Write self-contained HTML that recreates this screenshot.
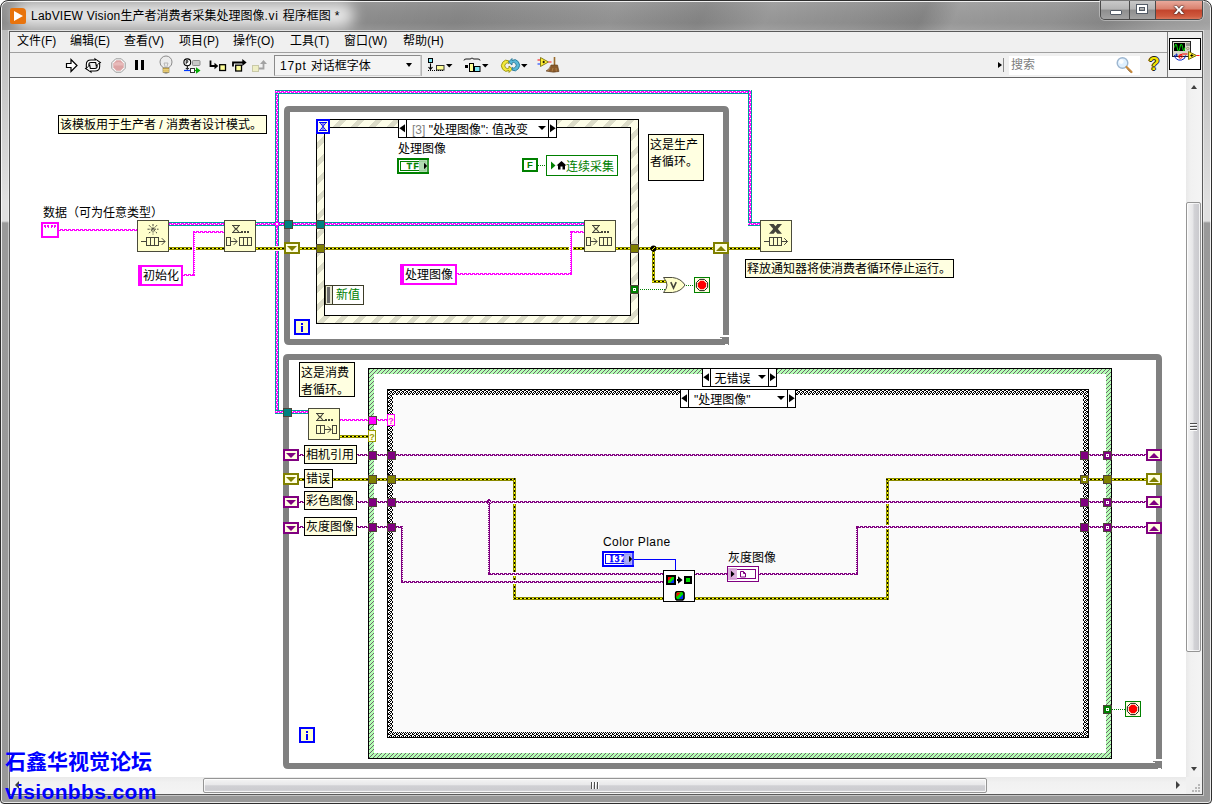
<!DOCTYPE html>
<html lang="zh"><head><meta charset="utf-8"><title>LabVIEW Vision生产者消费者采集处理图像.vi 程序框图</title>
<style>
html,body{margin:0;padding:0;}
body{width:1212px;height:804px;overflow:hidden;position:relative;background:#9a9a9a;font-family:"Liberation Sans","Noto Sans CJK SC",sans-serif;font-size:12px;color:#000;}
div{position:absolute;box-sizing:content-box;white-space:nowrap;}
svg{position:absolute;left:0;top:0;}
.lb{font-size:12px;overflow:hidden;}
.tx{font-size:12px;line-height:14px;}
.mn{font-size:12px;line-height:20px;top:31px;}
</style></head>
<body>
<div style="left:0;top:0;width:1212px;height:804px;background:#fff;"></div>
<div id="frame" style="left:0;top:0;width:1210px;height:802px;border:1px solid #2e2e2e;border-radius:8px 8px 4px 4px;background:linear-gradient(180deg,#b4b4b4 0px,#bcbcbc 31px,#e0e0e0 200px,#e0e0e0 220px,#9a9a9a 222px,#989898 100%);box-shadow:inset 0 0 0 1px rgba(255,255,255,.8);"></div>
<div id="titlebar" style="left:2px;top:2px;width:1208px;height:28px;border-radius:6px 6px 0 0;background:linear-gradient(115deg,rgba(255,255,255,0) 0px,rgba(255,255,255,0) 340px,rgba(0,0,0,.05) 420px,rgba(255,255,255,.06) 560px,rgba(0,0,0,.06) 640px,rgba(255,255,255,.10) 700px,rgba(255,255,255,.02) 780px,rgba(0,0,0,.07) 840px,rgba(255,255,255,.12) 870px,rgba(255,255,255,.05) 960px,rgba(0,0,0,.04) 1010px,rgba(255,255,255,.12) 1060px,rgba(255,255,255,.28) 1150px,rgba(255,255,255,.3) 1210px),linear-gradient(180deg,#969696 0,#8e8e8e 40%,#8a8a8a 75%,#949494 100%);"></div>
<div style="left:14px;top:3px;width:340px;height:25px;border-radius:14px;background:rgba(255,255,255,.78);filter:blur(7px);"></div>
<div style="left:10px;top:8px;width:16px;height:16px;border-radius:2px 4px 2px 2px;background:#e8730c;"></div>
<div style="left:14px;top:11px;width:0;height:0;border-left:9px solid #fff;border-top:5px solid transparent;border-bottom:5px solid transparent;"></div>
<div id="caption" style="left:31px;top:7px;height:18px;line-height:18px;font-size:12px;color:#000;"><span id="cap1" style="letter-spacing:0.21px">LabVIEW Vision</span><span id="cap2">生产者消费者采集处理图像</span><span id="cap3" style="letter-spacing:0.75px">.vi </span><span id="cap4">程序框图</span><span id="cap5" style="letter-spacing:0.5px"> *</span></div>
<div style="left:1100px;top:1px;width:101px;height:18px;border:1px solid #4a4a4a;border-top:none;border-radius:0 0 5px 5px;overflow:hidden;box-shadow:0 0 0 1px rgba(255,255,255,.35);"><div style="left:0;top:0;width:28px;height:18px;background:linear-gradient(180deg,#c8c8c8 0,#b4b4b4 45%,#8e8e8e 50%,#a2a2a2 100%);"></div><div style="left:28px;top:0;width:1px;height:18px;background:#4a4a4a;"></div><div style="left:29px;top:0;width:25px;height:18px;background:linear-gradient(180deg,#c8c8c8 0,#b4b4b4 45%,#8e8e8e 50%,#a2a2a2 100%);"></div><div style="left:54px;top:0;width:1px;height:18px;background:#4a4a4a;"></div><div style="left:55px;top:0;width:46px;height:18px;background:linear-gradient(180deg,#e9a99b 0,#d9806d 45%,#c2442c 50%,#cf5a3e 85%,#d9775c 100%);"></div><div style="left:9px;top:9px;width:10px;height:3px;background:#fff;border:1px solid #535b66;border-radius:1px;"></div><div style="left:36px;top:4px;width:6px;height:4px;border:2px solid #fff;outline:1px solid #535b66;box-shadow:inset 0 0 0 1px #535b66;"></div><div style="left:68px;top:-1px;width:20px;height:18px;line-height:18px;text-align:center;font-family:'Liberation Sans',sans-serif;font-weight:bold;font-size:15px;color:#fff;text-shadow:0 0 1px #3b2a2a,0 0 1px #3b2a2a,0 0 2px #3b2a2a;transform:scaleX(1.25);">x</div></div>
<div id="client" style="left:9px;top:31px;width:1192px;height:762px;border:1px solid #5a5a5a;background:#f0f0f0;box-shadow:0 0 0 1px rgba(255,255,255,.45);"></div>
<div class="mn" style="left:17px;">文件(F)</div>
<div class="mn" style="left:70px;">编辑(E)</div>
<div class="mn" style="left:124px;">查看(V)</div>
<div class="mn" style="left:179px;">项目(P)</div>
<div class="mn" style="left:233px;">操作(O)</div>
<div class="mn" style="left:290px;">工具(T)</div>
<div class="mn" style="left:344px;">窗口(W)</div>
<div class="mn" style="left:403px;">帮助(H)</div>
<div style="left:10px;top:52px;width:1157px;height:1px;background:#a0a0a0;"></div>
<div style="left:10px;top:77px;width:1192px;height:1px;background:#646464;"></div>
<div style="left:1167px;top:32px;width:1px;height:45px;background:#7a7a7a;"></div>
<div id="diagram" style="left:10px;top:78px;width:1176px;height:699px;background:#fff;"></div>
<div style="left:274px;top:55px;width:145px;height:19px;border:1px solid;border-color:#8a8a8a #d0d0d0 #d0d0d0 #8a8a8a;background:#f4f4f4;"></div>
<div style="left:280px;top:57px;height:19px;line-height:19px;font-size:12px;" id="fontring"><span style="letter-spacing:0.8px">17pt </span>对话框字体</div>
<div style="left:406px;top:63px;width:0;height:0;border-top:4px solid #000;border-left:3.5px solid transparent;border-right:3.5px solid transparent;"></div>
<div style="left:1009px;top:56px;width:131px;height:19px;background:#fff;"></div>
<div style="left:1011px;top:56px;height:19px;line-height:19px;font-size:12px;color:#7d7d7d;">搜索</div>
<div style="left:998px;top:62px;width:0;height:0;border-left:4px solid #000;border-top:3px solid transparent;border-bottom:3px solid transparent;"></div>
<div style="left:1003px;top:58px;width:1px;height:14px;background:#888;"></div>
<div style="left:1146px;top:53px;width:16px;height:22px;line-height:22px;text-align:center;font-family:'Liberation Sans',sans-serif;font-weight:bold;font-size:18px;color:#f2e400;text-shadow:1px 0 0 #222,-1px 0 0 #222,0 1px 0 #222,0 -1px 0 #222;">?</div>
<div style="left:1169px;top:38px;width:30px;height:30px;border:1px solid #000;background:#fff;"></div>
<div style="left:1186px;top:78px;width:16px;height:700px;background:linear-gradient(90deg,#e9e9e9 0,#f1f1f1 30%,#f4f4f4 100%);"></div>
<div style="left:1186px;top:202px;width:13px;height:448px;border:1px solid #959595;border-radius:2px;background:linear-gradient(90deg,#f4f4f4 0,#e6e6e8 45%,#d2d2d6 55%,#c8c8cc 100%);box-shadow:inset 0 0 0 1px rgba(255,255,255,.75);"></div>
<div style="left:1190px;top:423px;width:7px;height:1px;background:#4e4e4e;box-shadow:0 1px 0 rgba(255,255,255,.9);"></div>
<div style="left:1190px;top:426px;width:7px;height:1px;background:#4e4e4e;box-shadow:0 1px 0 rgba(255,255,255,.9);"></div>
<div style="left:1190px;top:429px;width:7px;height:1px;background:#4e4e4e;box-shadow:0 1px 0 rgba(255,255,255,.9);"></div>
<div style="left:1191px;top:85px;width:0;height:0;border-bottom:4px solid #404040;border-left:3.5px solid transparent;border-right:3.5px solid transparent;"></div>
<div style="left:1191px;top:767px;width:0;height:0;border-top:4px solid #404040;border-left:3.5px solid transparent;border-right:3.5px solid transparent;"></div>
<div style="left:10px;top:777px;width:1192px;height:17px;background:linear-gradient(180deg,#e9e9e9 0,#f1f1f1 30%,#f4f4f4 100%);"></div>
<div style="left:203px;top:778px;width:782px;height:13px;border:1px solid #959595;border-radius:2px;background:linear-gradient(180deg,#f4f4f4 0,#e8e8ea 45%,#d0d0d4 52%,#cdcdd1 80%,#d6d6da 100%);box-shadow:inset 0 0 0 1px rgba(255,255,255,.75);"></div>
<div style="left:591px;top:782px;width:1px;height:7px;background:#4e4e4e;box-shadow:1px 0 0 rgba(255,255,255,.9);"></div>
<div style="left:594px;top:782px;width:1px;height:7px;background:#4e4e4e;box-shadow:1px 0 0 rgba(255,255,255,.9);"></div>
<div style="left:597px;top:782px;width:1px;height:7px;background:#4e4e4e;box-shadow:1px 0 0 rgba(255,255,255,.9);"></div>
<div style="left:15px;top:781px;width:0;height:0;border-right:4px solid #404040;border-top:4px solid transparent;border-bottom:4px solid transparent;"></div>
<div style="left:1176px;top:781px;width:0;height:0;border-left:4px solid #404040;border-top:4px solid transparent;border-bottom:4px solid transparent;"></div>
<div style="left:1186px;top:777px;width:16px;height:17px;background:#f0f0f0;"></div>
<div style="left:1198px;top:790px;width:2px;height:2px;background:#b8b8b8;"></div>
<div style="left:1195px;top:790px;width:2px;height:2px;background:#b8b8b8;"></div>
<div style="left:1192px;top:790px;width:2px;height:2px;background:#b8b8b8;"></div>
<div style="left:1198px;top:787px;width:2px;height:2px;background:#b8b8b8;"></div>
<div style="left:1195px;top:787px;width:2px;height:2px;background:#b8b8b8;"></div>
<div style="left:1198px;top:784px;width:2px;height:2px;background:#b8b8b8;"></div>
<svg width="1212" height="804" viewBox="0 0 1212 804" shape-rendering="crispEdges">
<path d="M66.5,63.5 h4.5 v-4 l6,6 l-6,6 v-4 h-4.5 z" fill="#fff" stroke="#000" stroke-width="1.2" stroke-linejoin="miter" shape-rendering="geometricPrecision"/>
<g shape-rendering="geometricPrecision" fill="none" stroke-linejoin="miter"><path d="M87.6,67 V64.5 Q87.6,61.3 91,61.300 H96" stroke="#000" stroke-width="3.6"/><path d="M98.4,64 V66.5 Q98.4,69.700 95,69.700 H90" stroke="#000" stroke-width="3.6"/><polygon points="95,58.9 100.400,62.500 96.300,65.900" fill="#fff" stroke="#000" stroke-width="1.1"/><polygon points="91,72.100 85.600,68.500 89.700,65.100" fill="#fff" stroke="#000" stroke-width="1.1"/><path d="M87.6,66.800 V64.5 Q87.6,61.3 91,61.300 H96.500" stroke="#fff" stroke-width="1.5"/><path d="M98.4,64.200 V66.5 Q98.4,69.700 95,69.700 H89.500" stroke="#fff" stroke-width="1.5"/></g>
<polygon points="125.2,68.3 121.3,72.2 115.7,72.2 111.8,68.3 111.8,62.7 115.7,58.8 121.3,58.8 125.2,62.7" fill="#fafafa" stroke="#9a9a9a" shape-rendering="geometricPrecision"/>
<polygon points="123.7,67.6 120.6,70.7 116.4,70.7 113.3,67.6 113.3,63.4 116.4,60.3 120.6,60.3 123.7,63.4" fill="#dca4a4" shape-rendering="geometricPrecision"/>
<path d="M113.5,65.5 h10 v-2 q-5,-3 -10,0 z" fill="#e8baba" shape-rendering="geometricPrecision"/>
<rect x="135" y="60" width="3" height="10" fill="#000" />
<rect x="141" y="60" width="3" height="10" fill="#000" />
<g shape-rendering="geometricPrecision"><path d="M163.5,68 q-4,-3 -3.5,-6 a6,6 0 0 1 12,0 q0.5,3 -3.5,6 z" fill="#ececec" stroke="#8c8c8c"/><path d="M164,63 l1.5,5 M168,63 l-1.5,5 M164,63 h4" fill="none" stroke="#aaa" stroke-width="0.8"/><rect x="163" y="68" width="6" height="4.5" fill="#d8b24a" stroke="#8a7a40" stroke-width="0.6"/><path d="M163,69.7 h6 M163,71.2 h6" stroke="#f3e3a0" stroke-width="0.7"/><rect x="164.5" y="72.5" width="3" height="1" fill="#777"/></g>
<g shape-rendering="geometricPrecision"><circle cx="187.3" cy="62.3" r="3.4" fill="#fff" stroke="#000" stroke-width="1.1"/><path d="M186.2,60.5 v3.8 M186.2,60.6 h1.6 v1.7 h-1.6" fill="none" stroke="#000" stroke-width="0.8"/><path d="M187.3,65.7 v3.5 M185.8,68 l1.5,1.5 l1.5,-1.5" fill="none" stroke="#000" stroke-width="1"/><rect x="192.5" y="60.5" width="7.5" height="5" rx="0.8" fill="#c8c8c8" stroke="#8e8e8e"/><path d="M184,70.5 h7" stroke="#0038ff" stroke-width="1.2"/><rect x="190.5" y="68.5" width="4" height="4" fill="#fff" stroke="#333"/><path d="M194.5,70.5 h2" stroke="#00a000" stroke-width="1.2"/><polygon points="196,67.3 200.5,70.5 196,73.7" fill="#00a800"/></g>
<g shape-rendering="geometricPrecision"><path d="M210.5,60.5 v5.5 h5" fill="none" stroke="#000" stroke-width="1.8"/><polygon points="214.5,62.8 218.3,66 214.5,69.2" fill="#000"/><rect x="219.7" y="64.7" width="5.8" height="5.8" fill="#ffff99" stroke="#000" stroke-width="1.3"/></g>
<g shape-rendering="geometricPrecision"><path d="M233,66.5 v-4 h10" fill="none" stroke="#000" stroke-width="1.8"/><polygon points="242.3,59 246.6,62.5 242.3,66" fill="#000"/><rect x="235.7" y="65.2" width="5.8" height="5.8" fill="#ffff99" stroke="#000" stroke-width="1.3"/></g>
<g shape-rendering="geometricPrecision"><rect x="252.5" y="65.5" width="6" height="6" fill="#eeeec4" stroke="#c9c9a8"/><path d="M259,68.5 h4.5 v-5" fill="none" stroke="#a2a2a2" stroke-width="1.8"/><polygon points="260,64 263.5,60 267,64" fill="#a2a2a2"/></g>
<rect x="421" y="55" width="1" height="21" fill="#b4b4b4" />
<g shape-rendering="geometricPrecision"><rect x="428.5" y="58.5" width="4" height="4" fill="#7fe6f5" stroke="#000"/><path d="M430.5,63.5 v5 M428.5,67 l2,2.3 l2,-2.3" fill="none" stroke="#000" stroke-width="1.1"/><rect x="436.5" y="65.5" width="7.5" height="4.5" fill="#ffff99" stroke="#333"/><path d="M428,70.5 h16" stroke="#000" stroke-dasharray="1 1"/><polygon points="446,64 452.5,64 449.2,67.6" fill="#000"/></g>
<g shape-rendering="geometricPrecision"><path d="M464,60.5 q0,-1.5 2,-1.5 h4 q1.5,0 2,-1.2 q0.5,1.2 2,1.2 h4 q2,0 2,1.5" fill="none" stroke="#000" stroke-width="0.9"/><rect x="465" y="65" width="3" height="3" fill="#000"/><rect x="469.5" y="63.5" width="4" height="8" fill="#ffff99" stroke="#000"/><rect x="474.5" y="66.5" width="5.5" height="5" fill="#7fe6f5" stroke="#000"/><polygon points="482,64 488.5,64 485.2,67.6" fill="#000"/></g>
<g shape-rendering="geometricPrecision"><path d="M509,61 a5,5.5 0 1 0 0,9.5 v2 l3.5,-3.5 l-3.5,-3 v2 a2.6,2.8 0 1 1 0,-4.5 z" fill="#f2ea3a" stroke="#8c8400" stroke-width="0.8"/><path d="M512,70 a5,5.5 0 1 0 0,-9.5 v-2 l-3.5,3.5 l3.5,3 v-2 a2.6,2.8 0 1 1 0,4.5 z" fill="#58b8d8" stroke="#1c6c8c" stroke-width="0.8"/><polygon points="521,64 527.5,64 524.2,67.6" fill="#000"/></g>
<g shape-rendering="geometricPrecision"><path d="M537.5,60 h3 " stroke="#ff0000" stroke-width="1"/><path d="M537.5,64 h3" stroke="#0030ff" stroke-width="1"/><polygon points="540.5,57.5 548.5,62 540.5,66.5" fill="#ffee33" stroke="#6a6200" stroke-width="0.8"/><path d="M542.5,62 h2.4 M543.7,60.8 v2.4" stroke="#000" stroke-width="0.9"/><path d="M548.5,62 h3" stroke="#ff0000" stroke-width="0.9"/><path d="M554.5,57 v8" stroke="#9a6b2a" stroke-width="1.6"/><path d="M551,65 h6.5 l1.5,6.5 q-6,1.5 -13,-0.5 q4,-2 5,-6 z" fill="#8a5a2c" stroke="#5e3d1c" stroke-width="0.6"/><path d="M550,68 l-2,3 M553,68 l-1,3.5 M556,68 l0.3,3.5" stroke="#c79a5a" stroke-width="0.6"/></g>
<g shape-rendering="geometricPrecision"><circle cx="1122.5" cy="63" r="5.3" fill="#dff0ff" stroke="#9db6d0" stroke-width="1.4"/><circle cx="1121.3" cy="61.6" r="2.3" fill="#fff" opacity="0.9"/><path d="M1126.5,67 l5,5" stroke="#c98a3c" stroke-width="2.2" stroke-linecap="round"/><path d="M1127.5,69.3 l3.3,3.3" stroke="#8a6a4a" stroke-width="0.8"/></g>
<g shape-rendering="geometricPrecision"><rect x="1172.5" y="41.5" width="18" height="15" fill="#d8d8c8" stroke="#222"/><rect x="1174" y="43" width="11" height="8" fill="#000"/><path d="M1174.5,47.5 q1.35,-7 2.7,0 t2.7,0 t2.7,0 t2.2,0" fill="none" stroke="#00e000" stroke-width="1"/><rect x="1186.5" y="43" width="1" height="3" fill="#555"/><rect x="1188.5" y="43" width="1" height="3" fill="#555"/><circle cx="1187.8" cy="48.5" r="1.2" fill="#e8d8b0" stroke="#555" stroke-width="0.5"/><path d="M1174.5,55 q1,6 7,5 q4,-1 4,-4.500" fill="none" stroke="#0020c0" stroke-width="1"/><path d="M1179.5,57.5 q0,-3.500 3,-3.500 h5" fill="none" stroke="#ff0000" stroke-width="1"/><circle cx="1180.5" cy="56.5" r="1.8" fill="none" stroke="#ff0000" stroke-width="0.9"/><path d="M1176.5,53.5 v3 M1175,55 h3" stroke="#0020c0" stroke-width="0.8"/><polygon points="1188.500,51.500 1196.500,55.500 1188.500,59.500" fill="#ffee33" stroke="#6a6200" stroke-width="0.9"/><path d="M1190.300,55.500 h3 M1191.800,54 v3" stroke="#000" stroke-width="0.9"/><path d="M1196.500,55.500 h3" stroke="#ff0000" stroke-width="0.9"/></g>
<defs>
<pattern id="evs" width="18" height="18" patternUnits="userSpaceOnUse" patternTransform="translate(9 0)">
<rect width="18" height="18" fill="#fdfde8"/>
<polygon points="0,0 7,0 0,7" fill="#dcdcc8"/><polygon points="18,0 18,7 7,18 0,18" fill="#dcdcc8"/>
</pattern>
<pattern id="grn" width="4" height="4" patternUnits="userSpaceOnUse">
<rect width="4" height="4" fill="#b4ffb4"/>
<rect x="2" y="0" width="1" height="1" fill="#6e646e"/><rect x="1" y="1" width="1" height="1" fill="#6e646e"/>
<rect x="0" y="2" width="1" height="1" fill="#6e646e"/><rect x="3" y="3" width="1" height="1" fill="#6e646e"/>
</pattern>
<pattern id="chk" width="4" height="4" patternUnits="userSpaceOnUse">
<rect width="4" height="4" fill="#000"/>
<rect x="0" y="0" width="1" height="1" fill="#fff"/><rect x="2" y="0" width="1" height="1" fill="#fff"/>
<rect x="1" y="1" width="1" height="1" fill="#fff"/><rect x="3" y="1" width="1" height="1" fill="#fff"/>
<rect x="2" y="2" width="2" height="1" fill="#fff"/>
<rect x="0" y="3" width="2" height="1" fill="#fff"/>
</pattern>
</defs>
<path shape-rendering="geometricPrecision" fill="#808080" fill-rule="evenodd" d="M289,106 H724 Q729,106 729,111 V345 H289 Q284,345 284,340 V111 Q284,106 289,106 Z M290,112 V339 H723 V112 Z"/>
<rect x="723" y="335" width="6" height="2" fill="#fff" />
<rect x="722" y="337" width="7" height="8" fill="#808080" />
<rect x="720" y="337" width="2" height="1" fill="#808080" />
<rect x="725" y="344" width="3" height="1" fill="#fff" />
<path shape-rendering="geometricPrecision" fill="#808080" fill-rule="evenodd" d="M288,354 H1157 Q1162,354 1162,359 V769 H288 Q283,769 283,764 V359 Q283,354 288,354 Z M289,360 V763 H1156 V360 Z"/>
<rect x="1156" y="759" width="6" height="2" fill="#fff" />
<rect x="1155" y="761" width="7" height="8" fill="#808080" />
<rect x="1153" y="761" width="2" height="1" fill="#808080" />
<rect x="1158" y="768" width="3" height="1" fill="#fff" />
<rect x="316" y="119" width="323" height="205" fill="#000" />
<rect x="317" y="120" width="321" height="203" fill="url(#evs)" />
<rect x="324" y="127" width="307" height="189" fill="#000" />
<rect x="325" y="128" width="305" height="187" fill="#fff" />
<rect x="368" y="368" width="744" height="391" fill="#000" />
<rect x="369" y="369" width="742" height="389" fill="url(#grn)" />
<rect x="374" y="374" width="732" height="379" fill="#fff" />
<rect x="387" y="389" width="702" height="349" fill="#000" />
<rect x="388" y="390" width="700" height="347" fill="url(#chk)" />
<rect x="393" y="395" width="690" height="337" fill="#fafafa" />
<line x1="59" y1="229.5" x2="137" y2="229.5" stroke="#ff00ff" stroke-dasharray="3 1" stroke-dashoffset="3"/>
<line x1="59" y1="230.5" x2="137" y2="230.5" stroke="#ff00ff" stroke-dasharray="3 1" stroke-dashoffset="1"/>
<rect x="169" y="222" width="55" height="4" fill="#00a0a0" />
<rect x="169" y="223" width="55" height="2" fill="#ff00ff" />
<line x1="169" y1="223.5" x2="224" y2="223.5" stroke="#fff" stroke-dasharray="1 3" stroke-dashoffset="1"/>
<line x1="169" y1="224.5" x2="224" y2="224.5" stroke="#fff" stroke-dasharray="1 3" stroke-dashoffset="3"/>
<rect x="256" y="222" width="328" height="4" fill="#00a0a0" />
<rect x="256" y="223" width="328" height="2" fill="#ff00ff" />
<line x1="256" y1="223.5" x2="584" y2="223.5" stroke="#fff" stroke-dasharray="1 3" stroke-dashoffset="0"/>
<line x1="256" y1="224.5" x2="584" y2="224.5" stroke="#fff" stroke-dasharray="1 3" stroke-dashoffset="2"/>
<rect x="275" y="90" width="4" height="156" fill="#00a0a0" />
<rect x="276" y="90" width="2" height="156" fill="#ff00ff" />
<line x1="276.5" y1="90" x2="276.5" y2="246" stroke="#fff" stroke-dasharray="1 3" stroke-dashoffset="2"/>
<line x1="277.5" y1="90" x2="277.5" y2="246" stroke="#fff" stroke-dasharray="1 3" stroke-dashoffset="0"/>
<rect x="275" y="251" width="4" height="163" fill="#00a0a0" />
<rect x="276" y="251" width="2" height="163" fill="#ff00ff" />
<line x1="276.5" y1="251" x2="276.5" y2="414" stroke="#fff" stroke-dasharray="1 3" stroke-dashoffset="3"/>
<line x1="277.5" y1="251" x2="277.5" y2="414" stroke="#fff" stroke-dasharray="1 3" stroke-dashoffset="1"/>
<rect x="275" y="90" width="477" height="4" fill="#00a0a0" />
<rect x="275" y="91" width="477" height="2" fill="#ff00ff" />
<line x1="275" y1="91.5" x2="752" y2="91.5" stroke="#fff" stroke-dasharray="1 3" stroke-dashoffset="3"/>
<line x1="275" y1="92.5" x2="752" y2="92.5" stroke="#fff" stroke-dasharray="1 3" stroke-dashoffset="1"/>
<rect x="748" y="90" width="4" height="136" fill="#00a0a0" />
<rect x="749" y="90" width="2" height="136" fill="#ff00ff" />
<line x1="749.5" y1="90" x2="749.5" y2="226" stroke="#fff" stroke-dasharray="1 3" stroke-dashoffset="2"/>
<line x1="750.5" y1="90" x2="750.5" y2="226" stroke="#fff" stroke-dasharray="1 3" stroke-dashoffset="0"/>
<rect x="748" y="222" width="12" height="4" fill="#00a0a0" />
<rect x="748" y="223" width="12" height="2" fill="#ff00ff" />
<line x1="748" y1="223.5" x2="760" y2="223.5" stroke="#fff" stroke-dasharray="1 3" stroke-dashoffset="0"/>
<line x1="748" y1="224.5" x2="760" y2="224.5" stroke="#fff" stroke-dasharray="1 3" stroke-dashoffset="2"/>
<rect x="275" y="410" width="33" height="4" fill="#00a0a0" />
<rect x="275" y="411" width="33" height="2" fill="#ff00ff" />
<line x1="275" y1="411.5" x2="308" y2="411.5" stroke="#fff" stroke-dasharray="1 3" stroke-dashoffset="3"/>
<line x1="275" y1="412.5" x2="308" y2="412.5" stroke="#fff" stroke-dasharray="1 3" stroke-dashoffset="1"/>
<rect x="275" y="222" width="4" height="4" fill="#ff00ff" />
<rect x="276" y="221" width="2" height="6" fill="#ff00ff" />
<rect x="274" y="223" width="6" height="2" fill="#ff00ff" />
<rect x="276" y="223" width="2" height="2" fill="#fff" />
<rect x="169" y="247" width="23" height="3" fill="#8a8a00" />
<line x1="169" y1="248.5" x2="192" y2="248.5" stroke="#000"/>
<line x1="169" y1="248.5" x2="192" y2="248.5" stroke="#ffff00" stroke-dasharray="2 2" stroke-dashoffset="1"/>
<rect x="196" y="247" width="28" height="3" fill="#8a8a00" />
<line x1="196" y1="248.5" x2="224" y2="248.5" stroke="#000"/>
<line x1="196" y1="248.5" x2="224" y2="248.5" stroke="#ffff00" stroke-dasharray="2 2" stroke-dashoffset="0"/>
<rect x="256" y="247" width="313" height="3" fill="#8a8a00" />
<line x1="256" y1="248.5" x2="569" y2="248.5" stroke="#000"/>
<line x1="256" y1="248.5" x2="569" y2="248.5" stroke="#ffff00" stroke-dasharray="2 2" stroke-dashoffset="0"/>
<rect x="573" y="247" width="11" height="3" fill="#8a8a00" />
<line x1="573" y1="248.5" x2="584" y2="248.5" stroke="#000"/>
<line x1="573" y1="248.5" x2="584" y2="248.5" stroke="#ffff00" stroke-dasharray="2 2" stroke-dashoffset="1"/>
<rect x="616" y="247" width="97" height="3" fill="#8a8a00" />
<line x1="616" y1="248.5" x2="713" y2="248.5" stroke="#000"/>
<line x1="616" y1="248.5" x2="713" y2="248.5" stroke="#ffff00" stroke-dasharray="2 2" stroke-dashoffset="0"/>
<rect x="729" y="247" width="31" height="3" fill="#8a8a00" />
<line x1="729" y1="248.5" x2="760" y2="248.5" stroke="#000"/>
<line x1="729" y1="248.5" x2="760" y2="248.5" stroke="#ffff00" stroke-dasharray="2 2" stroke-dashoffset="1"/>
<rect x="652" y="249" width="3" height="34" fill="#8a8a00" />
<line x1="653.5" y1="249" x2="653.5" y2="283" stroke="#000"/>
<line x1="653.5" y1="249" x2="653.5" y2="283" stroke="#ffff00" stroke-dasharray="2 2" stroke-dashoffset="1"/>
<rect x="652" y="280" width="16" height="3" fill="#8a8a00" />
<line x1="652" y1="281.5" x2="668" y2="281.5" stroke="#000"/>
<line x1="652" y1="281.5" x2="668" y2="281.5" stroke="#ffff00" stroke-dasharray="2 2" stroke-dashoffset="0"/>
<circle cx="653.5" cy="248.5" r="3" fill="#000" shape-rendering="geometricPrecision"/>
<line x1="652" y1="250" x2="655" y2="247" stroke="#ffff00" shape-rendering="geometricPrecision"/>
<line x1="183" y1="274.5" x2="195" y2="274.5" stroke="#ff00ff" stroke-dasharray="3 1" stroke-dashoffset="3"/>
<line x1="183" y1="275.5" x2="195" y2="275.5" stroke="#ff00ff" stroke-dasharray="3 1" stroke-dashoffset="1"/>
<line x1="193.5" y1="231" x2="193.5" y2="276" stroke="#ff00ff"/>
<line x1="194.5" y1="231" x2="194.5" y2="276" stroke="#ff00ff" stroke-dasharray="1 1" stroke-dashoffset="1"/>
<line x1="193" y1="231.5" x2="224" y2="231.5" stroke="#ff00ff" stroke-dasharray="3 1" stroke-dashoffset="1"/>
<line x1="193" y1="232.5" x2="224" y2="232.5" stroke="#ff00ff" stroke-dasharray="3 1" stroke-dashoffset="3"/>
<line x1="457" y1="273.5" x2="572" y2="273.5" stroke="#ff00ff" stroke-dasharray="3 1" stroke-dashoffset="1"/>
<line x1="457" y1="274.5" x2="572" y2="274.5" stroke="#ff00ff" stroke-dasharray="3 1" stroke-dashoffset="3"/>
<line x1="570.5" y1="231" x2="570.5" y2="275" stroke="#ff00ff" stroke-dasharray="1 1" stroke-dashoffset="1"/>
<line x1="571.5" y1="231" x2="571.5" y2="275" stroke="#ff00ff"/>
<line x1="570" y1="231.5" x2="584" y2="231.5" stroke="#ff00ff" stroke-dasharray="3 1" stroke-dashoffset="2"/>
<line x1="570" y1="232.5" x2="584" y2="232.5" stroke="#ff00ff" stroke-dasharray="3 1" stroke-dashoffset="0"/>
<line x1="538" y1="165.5" x2="546" y2="165.5" stroke="#008000" stroke-dasharray="1 1" stroke-dashoffset="0"/>
<line x1="639" y1="289.5" x2="667" y2="289.5" stroke="#008000" stroke-dasharray="1 1" stroke-dashoffset="1"/>
<line x1="685" y1="285.5" x2="694" y2="285.5" stroke="#008000" stroke-dasharray="1 1" stroke-dashoffset="1"/>
<line x1="340" y1="419.5" x2="387" y2="419.5" stroke="#ff00ff" stroke-dasharray="3 1" stroke-dashoffset="0"/>
<line x1="340" y1="420.5" x2="387" y2="420.5" stroke="#ff00ff" stroke-dasharray="3 1" stroke-dashoffset="2"/>
<rect x="340" y="435" width="28" height="3" fill="#8a8a00" />
<line x1="340" y1="436.5" x2="368" y2="436.5" stroke="#000"/>
<line x1="340" y1="436.5" x2="368" y2="436.5" stroke="#ffff00" stroke-dasharray="2 2" stroke-dashoffset="0"/>
<rect x="299" y="478" width="217" height="3" fill="#8a8a00" />
<line x1="299" y1="479.5" x2="516" y2="479.5" stroke="#000"/>
<line x1="299" y1="479.5" x2="516" y2="479.5" stroke="#ffff00" stroke-dasharray="2 2" stroke-dashoffset="3"/>
<rect x="513" y="478" width="3" height="122" fill="#8a8a00" />
<line x1="514.5" y1="478" x2="514.5" y2="600" stroke="#000"/>
<line x1="514.5" y1="478" x2="514.5" y2="600" stroke="#ffff00" stroke-dasharray="2 2" stroke-dashoffset="2"/>
<rect x="513" y="597" width="376" height="3" fill="#8a8a00" />
<line x1="513" y1="598.5" x2="889" y2="598.5" stroke="#000"/>
<line x1="513" y1="598.5" x2="889" y2="598.5" stroke="#ffff00" stroke-dasharray="2 2" stroke-dashoffset="1"/>
<rect x="886" y="478" width="3" height="122" fill="#8a8a00" />
<line x1="887.5" y1="478" x2="887.5" y2="600" stroke="#000"/>
<line x1="887.5" y1="478" x2="887.5" y2="600" stroke="#ffff00" stroke-dasharray="2 2" stroke-dashoffset="2"/>
<rect x="886" y="478" width="260" height="3" fill="#8a8a00" />
<line x1="886" y1="479.5" x2="1146" y2="479.5" stroke="#000"/>
<line x1="886" y1="479.5" x2="1146" y2="479.5" stroke="#ffff00" stroke-dasharray="2 2" stroke-dashoffset="2"/>
<rect x="513" y="500" width="3" height="4" fill="#fff" />
<rect x="513" y="572" width="3" height="4" fill="#fff" />
<rect x="513" y="580" width="3" height="4" fill="#fff" />
<rect x="886" y="500" width="3" height="4" fill="#fff" />
<rect x="886" y="525" width="3" height="4" fill="#fff" />
<line x1="299" y1="454.5" x2="1146" y2="454.5" stroke="#800080" stroke-dasharray="3 1" stroke-dashoffset="3"/>
<line x1="299" y1="455.5" x2="1146" y2="455.5" stroke="#800080" stroke-dasharray="3 1" stroke-dashoffset="1"/>
<line x1="299" y1="501.5" x2="1146" y2="501.5" stroke="#800080" stroke-dasharray="3 1" stroke-dashoffset="3"/>
<line x1="299" y1="502.5" x2="1146" y2="502.5" stroke="#800080" stroke-dasharray="3 1" stroke-dashoffset="1"/>
<line x1="299" y1="526.5" x2="402" y2="526.5" stroke="#800080" stroke-dasharray="3 1" stroke-dashoffset="3"/>
<line x1="299" y1="527.5" x2="402" y2="527.5" stroke="#800080" stroke-dasharray="3 1" stroke-dashoffset="1"/>
<line x1="401.5" y1="526" x2="401.5" y2="583" stroke="#800080"/>
<line x1="402.5" y1="526" x2="402.5" y2="583" stroke="#800080" stroke-dasharray="1 1" stroke-dashoffset="0"/>
<line x1="401" y1="581.5" x2="663" y2="581.5" stroke="#800080" stroke-dasharray="3 1" stroke-dashoffset="1"/>
<line x1="401" y1="582.5" x2="663" y2="582.5" stroke="#800080" stroke-dasharray="3 1" stroke-dashoffset="3"/>
<line x1="488.5" y1="501" x2="488.5" y2="575" stroke="#800080" stroke-dasharray="1 1" stroke-dashoffset="1"/>
<line x1="489.5" y1="501" x2="489.5" y2="575" stroke="#800080"/>
<line x1="488" y1="573.5" x2="727" y2="573.5" stroke="#800080" stroke-dasharray="3 1" stroke-dashoffset="0"/>
<line x1="488" y1="574.5" x2="727" y2="574.5" stroke="#800080" stroke-dasharray="3 1" stroke-dashoffset="2"/>
<line x1="759" y1="573.5" x2="858" y2="573.5" stroke="#800080" stroke-dasharray="3 1" stroke-dashoffset="3"/>
<line x1="759" y1="574.5" x2="858" y2="574.5" stroke="#800080" stroke-dasharray="3 1" stroke-dashoffset="1"/>
<line x1="856.5" y1="526" x2="856.5" y2="575" stroke="#800080" stroke-dasharray="1 1" stroke-dashoffset="0"/>
<line x1="857.5" y1="526" x2="857.5" y2="575" stroke="#800080"/>
<line x1="856" y1="526.5" x2="1146" y2="526.5" stroke="#800080" stroke-dasharray="3 1" stroke-dashoffset="0"/>
<line x1="856" y1="527.5" x2="1146" y2="527.5" stroke="#800080" stroke-dasharray="3 1" stroke-dashoffset="2"/>
<rect x="488" y="499" width="2" height="6" fill="#800080" />
<rect x="487" y="500" width="4" height="4" fill="#800080" />
<rect x="489" y="501" width="1" height="1" fill="#fff" />
<rect x="488" y="503" width="1" height="1" fill="#fff" />
<rect x="490" y="502" width="1" height="1" fill="#fff" />
<line x1="634" y1="559.5" x2="676" y2="559.5" stroke="#0000ff"/>
<line x1="675.5" y1="559" x2="675.5" y2="571" stroke="#0000ff"/>
<line x1="1112" y1="709.5" x2="1125" y2="709.5" stroke="#008000" stroke-dasharray="1 1" stroke-dashoffset="0"/>
<rect x="284.5" y="220.5" width="8" height="8" fill="#008080" stroke="#4d4438" stroke-width="1"/>
<rect x="316.5" y="220.5" width="8" height="8" fill="#008080" stroke="#4d4438" stroke-width="1"/>
<rect x="316.5" y="244.5" width="8" height="8" fill="#808000" stroke="#4d4438" stroke-width="1"/>
<rect x="630.5" y="244.5" width="8" height="8" fill="#808000" stroke="#4d4438" stroke-width="1"/>
<rect x="630.5" y="285.5" width="8" height="8" fill="#008000" stroke="#4d4438" stroke-width="1"/>
<rect x="633" y="288" width="3" height="3" fill="#fff" />
<rect x="634" y="289" width="1" height="1" fill="#008000" />
<rect x="283.5" y="408.5" width="8" height="8" fill="#008080" stroke="#4d4438" stroke-width="1"/>
<rect x="368.5" y="416.5" width="8" height="8" fill="#ff00ff" stroke="#4d4438" stroke-width="1"/>
<rect x="368.5" y="451.5" width="8" height="8" fill="#800080" stroke="#4d4438" stroke-width="1"/>
<rect x="387.5" y="451.5" width="8" height="8" fill="#800080" stroke="#4d4438" stroke-width="1"/>
<rect x="1080.5" y="451.5" width="8" height="8" fill="#800080" stroke="#4d4438" stroke-width="1"/>
<rect x="1103.5" y="451.5" width="8" height="8" fill="#800080" stroke="#4d4438" stroke-width="1"/>
<rect x="1106" y="454" width="3" height="3" fill="#fff" />
<rect x="1107" y="455" width="1" height="1" fill="#800080" />
<rect x="368.5" y="475.5" width="8" height="8" fill="#808000" stroke="#4d4438" stroke-width="1"/>
<rect x="387.5" y="475.5" width="8" height="8" fill="#808000" stroke="#4d4438" stroke-width="1"/>
<rect x="1080.5" y="475.5" width="8" height="8" fill="#808000" stroke="#4d4438" stroke-width="1"/>
<rect x="1083" y="478" width="3" height="3" fill="#fff" />
<rect x="1084" y="479" width="1" height="1" fill="#808000" />
<rect x="1103.5" y="475.5" width="8" height="8" fill="#808000" stroke="#4d4438" stroke-width="1"/>
<rect x="368.5" y="498.5" width="8" height="8" fill="#800080" stroke="#4d4438" stroke-width="1"/>
<rect x="387.5" y="498.5" width="8" height="8" fill="#800080" stroke="#4d4438" stroke-width="1"/>
<rect x="1080.5" y="498.5" width="8" height="8" fill="#800080" stroke="#4d4438" stroke-width="1"/>
<rect x="1103.5" y="498.5" width="8" height="8" fill="#800080" stroke="#4d4438" stroke-width="1"/>
<rect x="1106" y="501" width="3" height="3" fill="#fff" />
<rect x="1107" y="502" width="1" height="1" fill="#800080" />
<rect x="368.5" y="523.5" width="8" height="8" fill="#800080" stroke="#4d4438" stroke-width="1"/>
<rect x="387.5" y="523.5" width="8" height="8" fill="#800080" stroke="#4d4438" stroke-width="1"/>
<rect x="1080.5" y="523.5" width="8" height="8" fill="#800080" stroke="#4d4438" stroke-width="1"/>
<rect x="1103.5" y="523.5" width="8" height="8" fill="#800080" stroke="#4d4438" stroke-width="1"/>
<rect x="1106" y="526" width="3" height="3" fill="#fff" />
<rect x="1107" y="527" width="1" height="1" fill="#800080" />
<rect x="1103.5" y="705.5" width="8" height="8" fill="#008000" stroke="#4d4438" stroke-width="1"/>
<rect x="1106" y="708" width="3" height="3" fill="#fff" />
<rect x="1107" y="709" width="1" height="1" fill="#008000" />
<rect x="387.5" y="414.5" width="7" height="11" fill="#ffffe1" stroke="#ff00ff" stroke-width="1"/>
<text x="391" y="423.5" font-family="Liberation Sans,sans-serif" font-size="9" font-weight="bold" text-anchor="middle" fill="#ff00ff" shape-rendering="geometricPrecision">?</text>
<rect x="368.5" y="430.5" width="7" height="11" fill="#ffffe1" stroke="#9a9a00" stroke-width="1"/>
<text x="372" y="439.5" font-family="Liberation Sans,sans-serif" font-size="9" font-weight="bold" text-anchor="middle" fill="#9a9a00" shape-rendering="geometricPrecision">?</text>
<rect x="285.0" y="243.0" width="14" height="10" fill="#ffffe1" stroke="#808000" stroke-width="2"/>
<polygon points="287,246 297,246 292,251" fill="#808000" shape-rendering="geometricPrecision"/>
<rect x="714.0" y="243.0" width="14" height="10" fill="#ffffe1" stroke="#808000" stroke-width="2"/>
<polygon points="716,251 726,251 721,246" fill="#808000" shape-rendering="geometricPrecision"/>
<rect x="284.0" y="450.0" width="14" height="10" fill="#ffffe1" stroke="#800080" stroke-width="2"/>
<polygon points="286,453 296,453 291,458" fill="#800080" shape-rendering="geometricPrecision"/>
<rect x="1147.0" y="450.0" width="14" height="10" fill="#ffffe1" stroke="#800080" stroke-width="2"/>
<polygon points="1149,458 1159,458 1154,453" fill="#800080" shape-rendering="geometricPrecision"/>
<rect x="284.0" y="474.0" width="14" height="10" fill="#ffffe1" stroke="#808000" stroke-width="2"/>
<polygon points="286,477 296,477 291,482" fill="#808000" shape-rendering="geometricPrecision"/>
<rect x="1147.0" y="474.0" width="14" height="10" fill="#ffffe1" stroke="#808000" stroke-width="2"/>
<polygon points="1149,482 1159,482 1154,477" fill="#808000" shape-rendering="geometricPrecision"/>
<rect x="284.0" y="497.0" width="14" height="10" fill="#ffffe1" stroke="#800080" stroke-width="2"/>
<polygon points="286,500 296,500 291,505" fill="#800080" shape-rendering="geometricPrecision"/>
<rect x="1147.0" y="497.0" width="14" height="10" fill="#ffffe1" stroke="#800080" stroke-width="2"/>
<polygon points="1149,505 1159,505 1154,500" fill="#800080" shape-rendering="geometricPrecision"/>
<rect x="284.0" y="523.0" width="14" height="10" fill="#ffffe1" stroke="#800080" stroke-width="2"/>
<polygon points="286,526 296,526 291,531" fill="#800080" shape-rendering="geometricPrecision"/>
<rect x="1147.0" y="523.0" width="14" height="10" fill="#ffffe1" stroke="#800080" stroke-width="2"/>
<polygon points="1149,531 1159,531 1154,526" fill="#800080" shape-rendering="geometricPrecision"/>
<rect x="137.5" y="220.5" width="31" height="31" fill="#ffffcc" stroke="#4b4b3c" stroke-width="1"/>
<g stroke="#45453a" fill="none" shape-rendering="geometricPrecision"><path d="M153,224 v10.5 M147.5,229.2 h11 M149,225.2 l8,8 M157,225.2 l-8,8" stroke-width="1" stroke-dasharray="2.2 1"/></g>
<line x1="141" y1="241.5" x2="147" y2="241.5" stroke="#45453a"/>
<rect x="146.5" y="237.5" width="4" height="8" fill="none" stroke="#45453a" stroke-width="1"/>
<rect x="150.5" y="237.5" width="4" height="8" fill="none" stroke="#45453a" stroke-width="1"/>
<rect x="154.5" y="237.5" width="4" height="8" fill="none" stroke="#45453a" stroke-width="1"/>
<path d="M159,241.5 h6 M161.8,238.2 l3.3,3.3 l-3.3,3.3" stroke="#45453a" fill="none" shape-rendering="geometricPrecision"/>
<rect x="224.5" y="220.5" width="31" height="31" fill="#ffffcc" stroke="#4b4b3c" stroke-width="1"/>
<path d="M232,225.5 h8 M232,232.5 h9 M233.2,226 l2.3,2.6 v0.8 l-2.3,2.6 M238.8,226 l-2.3,2.6 v0.8 l2.3,2.6 M234.5,228.5 h3" stroke="#45453a" stroke-width="1.1" fill="none" shape-rendering="geometricPrecision"/>
<rect x="241" y="231" width="2" height="2" fill="#45453a" />
<rect x="244" y="231" width="2" height="2" fill="#45453a" />
<rect x="247" y="231" width="2" height="2" fill="#45453a" />
<rect x="226.5" y="237.5" width="4" height="8" fill="none" stroke="#45453a" stroke-width="1"/>
<path d="M231,241.5 h6 M233.8,238.2 l3.3,3.3 l-3.3,3.3" stroke="#45453a" fill="none" shape-rendering="geometricPrecision"/>
<rect x="239.5" y="237.5" width="4" height="8" fill="none" stroke="#45453a" stroke-width="1"/>
<rect x="243.5" y="237.5" width="4" height="8" fill="none" stroke="#45453a" stroke-width="1"/>
<rect x="247.5" y="237.5" width="4" height="8" fill="none" stroke="#45453a" stroke-width="1"/>
<rect x="584.5" y="220.5" width="31" height="31" fill="#ffffcc" stroke="#4b4b3c" stroke-width="1"/>
<path d="M592,225.5 h8 M592,232.5 h9 M593.2,226 l2.3,2.6 v0.8 l-2.3,2.6 M598.8,226 l-2.3,2.6 v0.8 l2.3,2.6 M594.5,228.5 h3" stroke="#45453a" stroke-width="1.1" fill="none" shape-rendering="geometricPrecision"/>
<rect x="601" y="231" width="2" height="2" fill="#45453a" />
<rect x="604" y="231" width="2" height="2" fill="#45453a" />
<rect x="607" y="231" width="2" height="2" fill="#45453a" />
<rect x="586.5" y="237.5" width="4" height="8" fill="none" stroke="#45453a" stroke-width="1"/>
<path d="M591,241.5 h6 M593.8,238.2 l3.3,3.3 l-3.3,3.3" stroke="#45453a" fill="none" shape-rendering="geometricPrecision"/>
<rect x="599.5" y="237.5" width="4" height="8" fill="none" stroke="#45453a" stroke-width="1"/>
<rect x="603.5" y="237.5" width="4" height="8" fill="none" stroke="#45453a" stroke-width="1"/>
<rect x="607.5" y="237.5" width="4" height="8" fill="none" stroke="#45453a" stroke-width="1"/>
<rect x="760.5" y="220.5" width="31" height="31" fill="#ffffcc" stroke="#4b4b3c" stroke-width="1"/>
<path d="M769,224 h4.6 l8.4,9.8 h-4.6 z" fill="#45453a" shape-rendering="geometricPrecision"/><path d="M782,224 h-4.6 l-8.400,9.8 h4.6 z" fill="#45453a" shape-rendering="geometricPrecision"/>
<line x1="764" y1="241.5" x2="770" y2="241.5" stroke="#45453a"/>
<rect x="769.5" y="237.5" width="4" height="8" fill="none" stroke="#45453a" stroke-width="1"/>
<rect x="773.5" y="237.5" width="4" height="8" fill="none" stroke="#45453a" stroke-width="1"/>
<rect x="777.5" y="237.5" width="4" height="8" fill="none" stroke="#45453a" stroke-width="1"/>
<path d="M782,241.5 h5.5 M784.2,238.2 l3.3,3.3 l-3.3,3.3" stroke="#45453a" fill="none" shape-rendering="geometricPrecision"/>
<rect x="308.5" y="408.5" width="31" height="31" fill="#ffffcc" stroke="#4b4b3c" stroke-width="1"/>
<path d="M316,413.5 h8 M316,420.5 h9 M317.2,414 l2.3,2.6 v0.8 l-2.3,2.6 M322.8,414 l-2.3,2.6 v0.8 l2.3,2.6 M318.5,416.5 h3" stroke="#45453a" stroke-width="1.1" fill="none" shape-rendering="geometricPrecision"/>
<rect x="325" y="419" width="2" height="2" fill="#45453a" />
<rect x="328" y="419" width="2" height="2" fill="#45453a" />
<rect x="331" y="419" width="2" height="2" fill="#45453a" />
<rect x="316.5" y="425.5" width="4" height="8" fill="none" stroke="#45453a" stroke-width="1"/>
<rect x="320.5" y="425.5" width="4" height="8" fill="none" stroke="#45453a" stroke-width="1"/>
<path d="M325,429.5 h6 M327.800,426.200 l3.300,3.300 l-3.300,3.300" stroke="#45453a" fill="none" shape-rendering="geometricPrecision"/>
<rect x="332.5" y="425.5" width="4" height="8" fill="none" stroke="#45453a" stroke-width="1"/>
<rect x="663.5" y="570.5" width="31" height="31" fill="#fff" stroke="#000" stroke-width="1"/>
<rect x="666" y="575" width="10" height="10" fill="#000" />
<rect x="668" y="577" width="6" height="6" fill="#00e000" />
<polygon points="668,577 672,577 668,581" fill="#ff0000" shape-rendering="geometricPrecision"/><polygon points="674,579 674,583 670,583" fill="#0030ff" shape-rendering="geometricPrecision"/>
<polygon points="678,576.3 682.6,580 678,583.7" fill="#000" shape-rendering="geometricPrecision"/>
<rect x="677" y="579" width="1" height="2" fill="#000" />
<rect x="684" y="576" width="8" height="8" fill="#000" />
<rect x="686" y="578" width="4" height="4" fill="#00e000" />
<rect x="675.5" y="591.5" width="8.5" height="8.5" rx="2.2" fill="#00e000" stroke="#000" stroke-width="1.2" shape-rendering="geometricPrecision"/>
<polygon points="676.5,592.5 681,592.5 676.5,597" fill="#ff0000" shape-rendering="geometricPrecision"/><polygon points="683,594.5 683,599 678.5,599" fill="#0030ff" shape-rendering="geometricPrecision"/>
<rect x="675.5" y="591.5" width="8.5" height="8.5" rx="2.2" fill="none" stroke="#000" stroke-width="1.2" shape-rendering="geometricPrecision"/>
<rect x="42.0" y="223.0" width="16" height="14" fill="#fff" stroke="#ff00ff" stroke-width="2"/>
<rect x="44" y="225" width="2" height="2" fill="#ff00ff" />
<rect x="45" y="227" width="1" height="1" fill="#ff00ff" />
<rect x="47" y="225" width="2" height="2" fill="#ff00ff" />
<rect x="48" y="227" width="1" height="1" fill="#ff00ff" />
<rect x="51" y="225" width="2" height="2" fill="#ff00ff" />
<rect x="51" y="227" width="1" height="1" fill="#ff00ff" />
<rect x="54" y="225" width="2" height="2" fill="#ff00ff" />
<rect x="54" y="227" width="1" height="1" fill="#ff00ff" />
<rect x="398.0" y="159.0" width="30" height="14" fill="#fff" stroke="#008000" stroke-width="2"/>
<rect x="400.5" y="161.5" width="25" height="9" fill="#fff" stroke="#008000" stroke-width="1"/>
<text x="413.5" y="169" font-family="Liberation Sans,sans-serif" font-weight="bold" font-size="8.5" letter-spacing="1.6" text-anchor="middle" fill="#008000" stroke="#008000" stroke-width="0.3" shape-rendering="geometricPrecision">TF</text>
<rect x="419" y="160" width="8" height="12" fill="#aad6aa" fill-opacity="0.9"/>
<rect x="427" y="160" width="2" height="12" fill="#fff" fill-opacity="0.22"/>
<polygon points="424,162.8 427.2,166 424,169.2" fill="#000" shape-rendering="geometricPrecision"/>
<rect x="603.0" y="552.0" width="30" height="14" fill="#fff" stroke="#0000ff" stroke-width="2"/>
<rect x="605.5" y="554.5" width="25" height="9" fill="#fff" stroke="#0000ff" stroke-width="1"/>
<text x="618.5" y="562" font-family="Liberation Serif,serif" font-weight="bold" font-size="9.5" letter-spacing="1.5" text-anchor="middle" fill="#0000ff" stroke="#0000ff" stroke-width="0.3" shape-rendering="geometricPrecision">I32</text>
<rect x="624" y="553" width="8" height="12" fill="#a6a6f6" fill-opacity="0.9"/>
<rect x="632" y="553" width="2" height="12" fill="#fff" fill-opacity="0.22"/>
<polygon points="629,555.8 632.2,559 629,562.2" fill="#000" shape-rendering="geometricPrecision"/>
<rect x="523.0" y="159.0" width="14" height="12" fill="#fff" stroke="#008000" stroke-width="2"/>
<text x="530" y="168" font-family="Liberation Sans,sans-serif" font-weight="bold" font-size="9.5" text-anchor="middle" fill="#008000" shape-rendering="geometricPrecision">F</text>
<rect x="546.5" y="155.5" width="71" height="20" fill="#fff" stroke="#008000" stroke-width="1"/>
<polygon points="551,161.5 555.5,165.5 551,169.5" fill="#008000" shape-rendering="geometricPrecision"/>
<path d="M556.5,165.5 l5,-4.5 l5,4.5 h-1.5 v4 h-2.5 v-3 h-2 v3 h-2.5 v-4 z" fill="#000" shape-rendering="geometricPrecision"/>
<path d="M663.5,277.5 H672.5 Q681,278.5 685,285 Q681,291.5 672.5,292.5 H663.5 Q670.5,285 663.5,277.5 Z" fill="#ffffcc" stroke="#4b4b3c" shape-rendering="geometricPrecision"/>
<path d="M670.8,282.2 l2.7,5.8 l2.7,-5.8" fill="none" stroke="#45453a" stroke-width="1.6" shape-rendering="geometricPrecision"/>
<rect x="694.5" y="277.5" width="15" height="15" fill="#ffffe1" stroke="#008000" stroke-width="1"/>
<polygon points="707.64,287.33 704.33,290.64 699.67,290.64 696.36,287.33 696.36,282.67 699.67,279.36 704.33,279.36 707.64,282.67" fill="#ffffe1" stroke="#000" stroke-width="0.9" shape-rendering="geometricPrecision"/>
<polygon points="706.16,286.72 703.72,289.16 700.28,289.16 697.84,286.72 697.84,283.28 700.28,280.84 703.72,280.84 706.16,283.28" fill="#ff0000" shape-rendering="geometricPrecision"/>
<rect x="1125.5" y="701.5" width="15" height="15" fill="#ffffe1" stroke="#008000" stroke-width="1"/>
<polygon points="1138.64,711.33 1135.33,714.64 1130.67,714.64 1127.36,711.33 1127.36,706.67 1130.67,703.36 1135.33,703.36 1138.64,706.67" fill="#ffffe1" stroke="#000" stroke-width="0.9" shape-rendering="geometricPrecision"/>
<polygon points="1137.16,710.72 1134.72,713.16 1131.28,713.16 1128.84,710.72 1128.84,707.28 1131.28,704.84 1134.72,704.84 1137.16,707.28" fill="#ff0000" shape-rendering="geometricPrecision"/>
<rect x="295.0" y="320.0" width="14" height="14" fill="#ffffcc" stroke="#0000ff" stroke-width="2"/>
<rect x="301" y="323" width="2" height="2" fill="#0000ff" />
<rect x="301" y="326" width="2" height="6" fill="#0000ff" />
<rect x="300.0" y="728.0" width="14" height="14" fill="#ffffcc" stroke="#0000ff" stroke-width="2"/>
<rect x="306" y="731" width="2" height="2" fill="#0000ff" />
<rect x="306" y="734" width="2" height="6" fill="#0000ff" />
<rect x="317.0" y="120.0" width="12" height="13" fill="#ffffe1" stroke="#0000ff" stroke-width="2"/>
<path d="M319,122.5 h8 M319,130.5 h8" stroke="#0000ff" stroke-width="1" fill="none"/><path d="M320.3,123.2 l2.4,2.800 v1 l-2.400,2.800 M325.700,123.2 l-2.400,2.800 v1 l2.400,2.800 M321.500,124 h3 M321.500,129 h3" stroke="#0000ff" stroke-width="1" fill="none" shape-rendering="geometricPrecision"/>
<rect x="325.5" y="285.5" width="38" height="19" fill="#fff" stroke="#3c3c28" stroke-width="1"/>
<rect x="326" y="286" width="6" height="18" fill="#e6e6d2" />
<rect x="332" y="286" width="1" height="18" fill="#3c3c28" />
<rect x="327" y="287" width="3" height="16" fill="#6a6a6a" />
<rect x="727.5" y="566.5" width="31" height="15" fill="#fff" stroke="#800080" stroke-width="1"/>
<rect x="730.5" y="569.5" width="25" height="9" fill="#fff" stroke="#800080" stroke-width="1"/>
<rect x="728" y="568" width="9" height="12" fill="#d9aad9" fill-opacity="0.9"/>
<polygon points="731,570.8 734.6,574 731,577.2" fill="#000" shape-rendering="geometricPrecision"/>
<path d="M740.5,571.5 h3 l2,2 v3.500 h-5 z M743.5,571.5 v2 h2" fill="#fff" stroke="#800080" shape-rendering="geometricPrecision"/>
<rect x="398.5" y="119.5" width="158" height="18" fill="#fff" stroke="#000" stroke-width="1"/>
<line x1="406.5" y1="119" x2="406.5" y2="138" stroke="#000"/>
<line x1="548.5" y1="119" x2="548.5" y2="138" stroke="#000"/>
<polygon points="405,124.3 405,132.2 399.3,128.25" fill="#000" shape-rendering="geometricPrecision"/>
<polygon points="550,124.3 550,132.2 555.7,128.25" fill="#000" shape-rendering="geometricPrecision"/>
<polygon points="538,126 546,126 542,130" fill="#000" shape-rendering="geometricPrecision"/>
<rect x="702.5" y="368.5" width="74" height="18" fill="#fff" stroke="#000" stroke-width="1"/>
<line x1="710.5" y1="368" x2="710.5" y2="387" stroke="#000"/>
<line x1="768.5" y1="368" x2="768.5" y2="387" stroke="#000"/>
<polygon points="709,373.3 709,381.2 703.3,377.25" fill="#000" shape-rendering="geometricPrecision"/>
<polygon points="770,373.3 770,381.2 775.7,377.25" fill="#000" shape-rendering="geometricPrecision"/>
<polygon points="758,375 766,375 762,379" fill="#000" shape-rendering="geometricPrecision"/>
<rect x="680.5" y="389.5" width="115" height="18" fill="#fff" stroke="#000" stroke-width="1"/>
<line x1="688.5" y1="389" x2="688.5" y2="408" stroke="#000"/>
<line x1="787.5" y1="389" x2="787.5" y2="408" stroke="#000"/>
<polygon points="687,394.3 687,402.2 681.3,398.25" fill="#000" shape-rendering="geometricPrecision"/>
<polygon points="789,394.3 789,402.2 794.7,398.25" fill="#000" shape-rendering="geometricPrecision"/>
<polygon points="777,396 785,396 781,400" fill="#000" shape-rendering="geometricPrecision"/>
</svg>
<div class="tx" style="left:412px;top:123px;line-height:14px;"><span style="color:#808080">[3] </span>&quot;处理图像&quot;: 值改变</div>
<div class="tx" style="left:714.5px;top:372px;line-height:14px;">无错误</div>
<div class="tx" style="left:694px;top:393px;line-height:14px;">&quot;处理图像&quot;</div>
<div class="lb" style="left:58px;top:115px;width:207px;height:16px;border:1px solid #000;background:#ffffe1;line-height:17px;padding-left:1px;padding-top:1px;width:206px;">该模板用于生产者 / 消费者设计模式。</div>
<div class="tx" style="left:43px;top:206px;line-height:15px;">数据（可为任意类型）</div>
<div class="lb" style="left:138px;top:265px;width:39px;height:17px;border:2px solid #ff00ff;border-left-width:4px;background:#fff;line-height:18px;padding-left:1px;width:38px;">初始化</div>
<div class="lb" style="left:400px;top:264px;width:51px;height:17px;border:2px solid #ff00ff;border-left-width:4px;background:#fff;line-height:18px;padding-left:1px;width:50px;">处理图像</div>
<div class="tx" style="left:398px;top:142px;">处理图像</div>
<div class="tx" style="left:566px;top:160px;color:#008000;line-height:15px;">连续采集</div>
<div class="tx" style="left:336px;top:288px;color:#008000;line-height:15px;">新值</div>
<div class="lb" style="left:648px;top:134px;width:54px;height:44px;border:1px solid #000;background:#ffffe1;line-height:17px;padding-left:1px;padding-top:1px;width:53px;padding-top:2px;height:43px;">这是生产<br>者循环。</div>
<div class="lb" style="left:745px;top:259px;width:207px;height:16px;border:1px solid #000;background:#ffffe1;line-height:17px;padding-left:1px;padding-top:1px;width:206px;">释放通知器将使消费者循环停止运行。</div>
<div class="lb" style="left:299px;top:362px;width:54px;height:32px;border:1px solid #000;background:#ffffe1;line-height:17px;padding-left:1px;padding-top:1px;width:53px;padding-top:2px;height:31px;">这是消费<br>者循环。</div>
<div class="lb" style="left:304px;top:445px;width:51px;height:16px;border:1px solid #000;background:#ffffe1;line-height:17px;padding-left:1px;padding-top:1px;width:50px;">相机引用</div>
<div class="lb" style="left:304px;top:469px;width:27px;height:16px;border:1px solid #000;background:#ffffe1;line-height:17px;padding-left:1px;padding-top:1px;width:26px;">错误</div>
<div class="lb" style="left:304px;top:491px;width:51px;height:16px;border:1px solid #000;background:#ffffe1;line-height:17px;padding-left:1px;padding-top:1px;width:50px;">彩色图像</div>
<div class="lb" style="left:304px;top:517px;width:51px;height:16px;border:1px solid #000;background:#ffffe1;line-height:17px;padding-left:1px;padding-top:1px;width:50px;">灰度图像</div>
<div class="tx" style="left:603px;top:535px;letter-spacing:0.45px;">Color Plane</div>
<div class="tx" style="left:728px;top:551px;">灰度图像</div>
<div id="wm1" style="left:5px;top:749px;height:26px;line-height:26px;font-size:21px;font-weight:bold;color:#0000ff;font-family:'Liberation Sans','Noto Sans CJK SC',sans-serif;">石鑫华视觉论坛</div>
<div id="wm2" style="left:5px;top:779px;height:26px;line-height:26px;font-size:21px;font-weight:bold;letter-spacing:0.36px;color:#0000ff;font-family:'Liberation Sans','Noto Sans CJK SC',sans-serif;">visionbbs.com</div>
</body></html>
